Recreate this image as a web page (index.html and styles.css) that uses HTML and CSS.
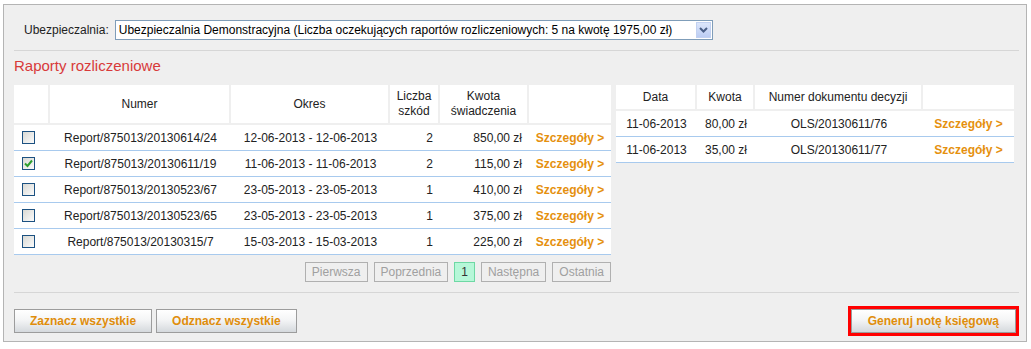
FILE: index.html
```html
<!DOCTYPE html>
<html lang="pl">
<head>
  <meta charset="UTF-8">
  <title>Raporty rozliczeniowe</title>
  <link rel="stylesheet" href="styles.css">
</head>
<body>
  <div class="panel">
    <div class="insurer">
      <span class="insurer-label">Ubezpieczalnia:</span>
      <div class="select">
        <span class="select-text">Ubezpieczalnia Demonstracyjna (Liczba oczekujących raportów rozliczeniowych: 5 na kwotę 1975,00 zł)</span>
        <span class="select-btn">
          <svg width="9" height="6" viewBox="0 0 9 6"><path d="M1 1 L4.5 4.5 L8 1" fill="none" stroke="#4a5f87" stroke-width="2"/></svg>
        </span>
      </div>
    </div>

    <div class="sep"></div>

    <h2 class="section-title">Raporty rozliczeniowe</h2>

    <div class="tables">
      <div class="reports">
        <table class="grid reports-table">
          <thead>
            <tr>
              <th class="w-check"></th>
              <th class="w-num">Numer</th>
              <th class="w-period">Okres</th>
              <th class="w-count">Liczba<br>szkód</th>
              <th class="w-amount">Kwota<br>świadczenia</th>
              <th class="w-link"></th>
            </tr>
          </thead>
          <tbody>
            <tr>
              <td class="c-check"><span class="check"></span></td>
              <td>Report/875013/20130614/24</td>
              <td>12-06-2013 - 12-06-2013</td>
              <td class="c-right">2</td>
              <td class="c-right">850,00 zł</td>
              <td><a href="#" class="details">Szczegóły &gt;</a></td>
            </tr>
            <tr>
              <td class="c-check"><span class="check checked"><svg width="11" height="11" viewBox="0 0 11 11"><path d="M2 5.5 L4.5 8 L9 2.5" fill="none" stroke="#2e9e2e" stroke-width="2"/></svg></span></td>
              <td>Report/875013/20130611/19</td>
              <td>11-06-2013 - 11-06-2013</td>
              <td class="c-right">2</td>
              <td class="c-right">115,00 zł</td>
              <td><a href="#" class="details">Szczegóły &gt;</a></td>
            </tr>
            <tr>
              <td class="c-check"><span class="check"></span></td>
              <td>Report/875013/20130523/67</td>
              <td>23-05-2013 - 23-05-2013</td>
              <td class="c-right">1</td>
              <td class="c-right">410,00 zł</td>
              <td><a href="#" class="details">Szczegóły &gt;</a></td>
            </tr>
            <tr>
              <td class="c-check"><span class="check"></span></td>
              <td>Report/875013/20130523/65</td>
              <td>23-05-2013 - 23-05-2013</td>
              <td class="c-right">1</td>
              <td class="c-right">375,00 zł</td>
              <td><a href="#" class="details">Szczegóły &gt;</a></td>
            </tr>
            <tr>
              <td class="c-check"><span class="check"></span></td>
              <td>Report/875013/20130315/7</td>
              <td>15-03-2013 - 15-03-2013</td>
              <td class="c-right">1</td>
              <td class="c-right">225,00 zł</td>
              <td><a href="#" class="details">Szczegóły &gt;</a></td>
            </tr>
          </tbody>
        </table>

        <div class="pager">
          <span class="page-btn">Pierwsza</span>
          <span class="page-btn">Poprzednia</span>
          <span class="page-btn current">1</span>
          <span class="page-btn">Następna</span>
          <span class="page-btn">Ostatnia</span>
        </div>
      </div>

      <table class="grid decisions-table">
        <thead>
          <tr>
            <th class="w-date">Data</th>
            <th class="w-sum">Kwota</th>
            <th class="w-doc">Numer dokumentu decyzji</th>
            <th class="w-link2"></th>
          </tr>
        </thead>
        <tbody>
          <tr>
            <td>11-06-2013</td>
            <td>80,00 zł</td>
            <td>OLS/20130611/76</td>
            <td><a href="#" class="details">Szczegóły &gt;</a></td>
          </tr>
          <tr>
            <td>11-06-2013</td>
            <td>35,00 zł</td>
            <td>OLS/20130611/77</td>
            <td><a href="#" class="details">Szczegóły &gt;</a></td>
          </tr>
        </tbody>
      </table>
    </div>

    <div class="sep sep-bottom"></div>

    <div class="actions">
      <div class="actions-left">
        <button class="btn">Zaznacz wszystkie</button>
        <button class="btn">Odznacz wszystkie</button>
      </div>
      <div class="highlight">
        <button class="btn">Generuj notę księgową</button>
      </div>
    </div>
  </div>
</body>
</html>
```

FILE: styles.css
```css
body {
  margin: 0;
  background-color: #fff;
  font-family: "Liberation Sans", Arial, sans-serif;
  font-size: 12px;
  color: #222;
}

.panel {
  width: 1005px;
  margin: 4px 0 0 3px;
  padding: 15px 7px 5px 10px;
  background-color: #efefef;
  border: 1px solid #b4b4b4;
}

.insurer {
  display: flex;
  align-items: center;
  height: 20px;
  padding-left: 10px;
}

.insurer-label {
  margin-right: 6px;
}

.select {
  display: flex;
  align-items: center;
  width: 596px;
  height: 18px;
  background-color: #fff;
  border: 1px solid #7f9db9;
}

.select-text {
  flex: 1;
  padding-left: 3px;
  color: #000;
  white-space: nowrap;
}

.select-btn {
  display: flex;
  align-items: center;
  justify-content: center;
  width: 15px;
  height: 16px;
  margin-right: 1px;
  background: linear-gradient(#dce6fb, #bccdf3);
  border: 1px solid #c2d1f1;
  box-sizing: border-box;
}

.sep {
  height: 1px;
  margin-top: 10px;
  background-color: #d6d6d6;
}

.section-title {
  margin: 6px 0 10px;
  font-size: 15px;
  line-height: 18px;
  font-weight: normal;
  color: #d83a3a;
}

.tables {
  display: flex;
  align-items: flex-start;
  gap: 5px;
}

.grid {
  border-collapse: separate;
  border-spacing: 0;
  table-layout: fixed;
}

.grid th {
  box-sizing: border-box;
  padding: 0 2px;
  background-color: #fff;
  border-right: 2px solid #efefef;
  border-bottom: 2px solid #efefef;
  font-weight: normal;
  line-height: 15px;
  color: #222;
  text-align: center;
}

.grid th:last-child {
  border-right: none;
}

.grid td {
  height: 25px;
  padding: 0 4px;
  background-color: #fff;
  border-bottom: 1px solid #a8caee;
  text-align: center;
  white-space: nowrap;
}

.reports-table {
  width: 597px;
}

.reports-table th {
  height: 40px;
}

.w-check { width: 36px; }
.w-num { width: 181px; }
.w-period { width: 159px; }
.w-count { width: 50px; }
.w-amount { width: 89px; }
.w-link { width: 82px; }

.decisions-table {
  width: 398px;
}

.decisions-table th {
  height: 26px;
}

.w-date { width: 81px; }
.w-sum { width: 58px; }
.w-doc { width: 168px; }
.w-link2 { width: 91px; }

.grid td.c-check {
  padding-left: 8px;
  text-align: left;
}

.grid td.c-right {
  padding-right: 7px;
  text-align: right;
}

.check {
  display: flex;
  align-items: center;
  justify-content: center;
  width: 13px;
  height: 13px;
  box-sizing: border-box;
  border: 1px solid #1c5181;
  background: linear-gradient(135deg, #d9d9d4, #fbfbfb);
}

.details {
  font-weight: bold;
  color: #e5900e;
  text-decoration: none;
}

.pager {
  display: flex;
  justify-content: flex-end;
  gap: 6px;
  margin-top: 7px;
}

.page-btn {
  height: 18px;
  padding: 0 6px;
  line-height: 18px;
  color: #a0a0a0;
  border: 1px solid #b0b0b0;
}

.page-btn.current {
  padding: 0 6px;
  color: #333;
  background-color: #b6f7d8;
  border-color: #6ed8a4;
}

.sep-bottom {
  margin-top: 10px;
}

.actions {
  display: flex;
  justify-content: space-between;
  align-items: center;
  margin-top: 13px;
}

.actions-left {
  display: flex;
  gap: 4px;
}

.btn {
  height: 24px;
  padding: 0 15px;
  font-family: "Liberation Sans", Arial, sans-serif;
  font-size: 12px;
  font-weight: bold;
  color: #e08d0b;
  background: linear-gradient(#ffffff, #f4f5f6 45%, #d5d9dd);
  border: 1px solid #9c9c9c;
  cursor: pointer;
}

.highlight .btn {
  padding: 0 16px;
}

.highlight {
  display: flex;
  border: 3px solid #f00;
}
```
